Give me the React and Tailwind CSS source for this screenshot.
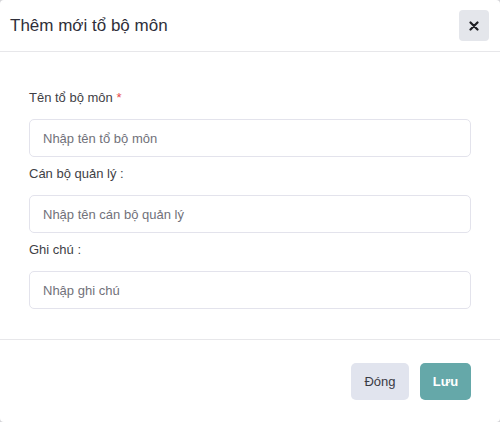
import React from "react";

const Field = ({ label, required, placeholder, className = "" }) => (
  <div className={className}>
    <label className="block text-[13px] leading-5 text-[#3f3f46]">
      {label}
      {required && <span className="text-[#e5484d]"> *</span>}
    </label>
    <input
      type="text"
      placeholder={placeholder}
      className="mt-[11px] block h-[38px] w-full rounded-[5px] border border-[#e3e3ec] bg-white px-[13px] text-[13px] text-[#333] outline-none placeholder:text-[#71717a]"
    />
  </div>
);

export default function App() {
  return (
    <div
      className="h-[422px] w-[500px] bg-[#d4d4d8]"
      style={{ fontFamily: '"Liberation Sans", Arial, sans-serif' }}
    >
      <div className="flex h-full w-full flex-col rounded-[4px] bg-white">
        {/* Header */}
        <div className="flex h-[52px] items-center justify-between border-b border-[#e7e7ea] pl-[10px] pr-[11px]">
          <h2 className="text-[17px] text-[#2f2f3a]">Thêm mới tổ bộ môn</h2>
          <button className="flex h-[31px] w-[30px] items-center justify-center rounded-[4px] bg-[#e4e6eb]">
            <svg width="10" height="10" viewBox="0 0 10 10">
              <path
                d="M1.5 1.5 L8.5 8.5 M8.5 1.5 L1.5 8.5"
                stroke="#1f1f24"
                strokeWidth="2.2"
                strokeLinecap="round"
              />
            </svg>
          </button>
        </div>

        {/* Body */}
        <div className="border-b border-[#e7e7ea] px-[29px] pb-[30px] pt-[36px]">
          <Field label="Tên tổ bộ môn" required placeholder="Nhập tên tổ bộ môn" />
          <Field
            label="Cán bộ quản lý :"
            placeholder="Nhập tên cán bộ quản lý"
            className="mt-[7px]"
          />
          <Field
            label="Ghi chú :"
            placeholder="Nhập ghi chú"
            className="mt-[7px]"
          />
        </div>

        {/* Footer */}
        <div className="flex justify-end gap-[11px] pr-[29px] pt-[23px]">
          <button className="h-[37px] w-[58px] rounded-[5px] bg-[#e1e4ee] text-[13px] text-[#3a3a44]">
            Đóng
          </button>
          <button className="h-[37px] w-[51px] rounded-[5px] bg-[#65a8a9] text-[13px] font-bold text-white">
            Lưu
          </button>
        </div>
      </div>
    </div>
  );
}
